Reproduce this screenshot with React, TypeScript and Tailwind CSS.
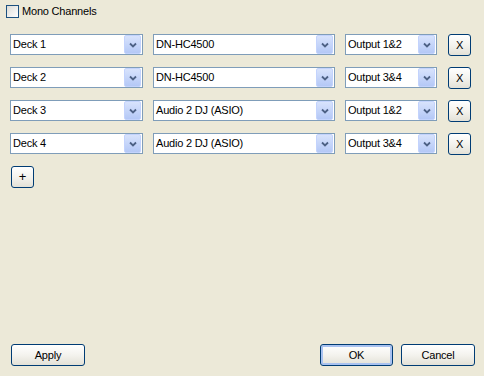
import { useState } from "react";

const rows = [
  { deck: "Deck 1", device: "DN-HC4500", output: "Output 1&2" },
  { deck: "Deck 2", device: "DN-HC4500", output: "Output 3&4" },
  { deck: "Deck 3", device: "Audio 2 DJ (ASIO)", output: "Output 1&2" },
  { deck: "Deck 4", device: "Audio 2 DJ (ASIO)", output: "Output 3&4" },
];

function Chevron() {
  return (
    <svg width="8" height="6" viewBox="0 0 8 6">
      <path d="M1 1.5 L4 4.5 L7 1.5" fill="none" stroke="#4d6185" strokeWidth="1.8" />
    </svg>
  );
}

function Combo({ value, width }: { value: string; width: string }) {
  return (
    <div className={`${width} h-[21px] bg-white border border-[#7f9db9] flex items-center shrink-0`}>
      <span className="flex-1 pl-[2px] truncate">{value}</span>
      <div className="w-[17px] h-[19px] mr-px rounded-[2px] border border-[#c3d3fd] bg-gradient-to-b from-[#d8e3fc] to-[#b4c8f6] flex items-center justify-center">
        <Chevron />
      </div>
    </div>
  );
}

function XpButton({
  children,
  className = "",
  focused = false,
}: {
  children: React.ReactNode;
  className?: string;
  focused?: boolean;
}) {
  return (
    <button
      className={`h-[22px] rounded-[3px] border border-[#003c74] bg-gradient-to-b from-white via-[#f4f3ee] to-[#e3e1d7] flex items-center justify-center text-black shrink-0 ${
        focused ? "shadow-[inset_0_0_0_2px_#a9c2f0]" : ""
      } ${className}`}
    >
      {children}
    </button>
  );
}

export default function App() {
  const [mono, setMono] = useState(false);

  return (
    <div
      className="w-[484px] h-[376px] bg-[#ece9d8] text-[11px] tracking-[-0.2px] text-black flex flex-col"
      style={{ fontFamily: '"Liberation Sans", Arial, sans-serif' }}
    >
      {/* Mono checkbox */}
      <label className="flex items-center gap-[3px] pl-[6px] pt-[5px] h-[18px]">
        <span
          onClick={() => setMono(!mono)}
          className="w-[13px] h-[13px] border border-[#1c5180] bg-gradient-to-br from-[#dcdcd7] to-white"
        />
        <span>Mono Channels</span>
      </label>

      {/* Deck rows */}
      <div className="flex flex-col gap-[11px] pl-[10px] pt-[16px]">
        {rows.map((r) => (
          <div key={r.deck} className="flex items-start h-[22px]">
            <Combo value={r.deck} width="w-[133px]" />
            <div className="w-[10px]" />
            <Combo value={r.device} width="w-[182px]" />
            <div className="w-[10px]" />
            <Combo value={r.output} width="w-[92px]" />
            <div className="w-[11px]" />
            <XpButton className="w-[23px]">X</XpButton>
          </div>
        ))}
      </div>

      <div className="pl-[11px] pt-[11px]">
        <XpButton className="w-[23px] text-[13px]">+</XpButton>
      </div>

      <div className="flex-1" />

      {/* Footer */}
      <div className="flex items-center pl-[11px] pr-[9px] pb-[10px]">
        <XpButton className="w-[74px]">Apply</XpButton>
        <div className="flex-1" />
        <XpButton className="w-[73px]" focused>
          OK
        </XpButton>
        <div className="w-[8px]" />
        <XpButton className="w-[74px]">Cancel</XpButton>
      </div>
    </div>
  );
}
